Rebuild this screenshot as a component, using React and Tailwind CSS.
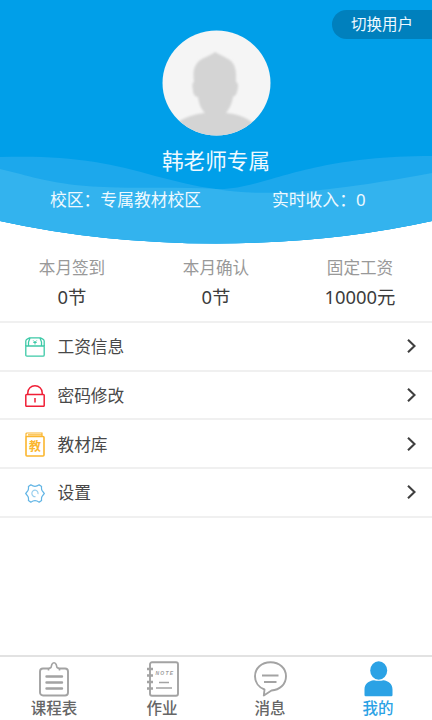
import React from 'react';

function HeaderWaves() {
  return (
    <svg className="absolute inset-0 h-[245px] w-full" viewBox="0 0 432 245" aria-hidden="true">
      <path fill="#009fe9" d="M0 0H432V221Q330 243.500 216 243.500Q102 243.500 0 221Z" />
      <path fill="#1ca8ec" d="M0 157C35 156 65 157 95 162C135 168 175 184 216 189C262 191 300 156 432 156V221Q330 243.500 216 243.500Q102 243.500 0 221Z" />
      <path fill="#33b3ee" d="M0 169C22 174 42 181 75 185C120 190 170 186 216 189C265 197 325 193 432 173V221Q330 243.500 216 243.500Q102 243.500 0 221Z" />
    </svg>
  );
}

function Avatar() {
  return (
    <svg className="h-[106px] w-[109px]" viewBox="0 0 109 106" aria-hidden="true">
      <defs>
        <clipPath id="face">
          <ellipse cx="54.500" cy="53" rx="54" ry="52.500" />
        </clipPath>
        <filter id="soft"><feGaussianBlur stdDeviation="0.8" /></filter>
      </defs>
      <ellipse cx="54.500" cy="53" rx="54" ry="52.500" fill="#f5f5f5" />
      <g clipPath="url(#face)">
        <path filter="url(#soft)" fill="#d4d4d4" d="M53 22C56 24 64 27 69 31C75 37 74 45 74 52C77 53 76 58 75 62C74 66 72 66 71 67C70 74 67 79 64 83C76 84 84 87 94 95V110H12V95C20 88 32 84 43 83C39 79 37 74 36 67C33 67 31 64 31 60C30 56 30 53 32 52C31 43 31 37 37 31C42 27 50 25 53 22Z" />
      </g>
    </svg>
  );
}

function WalletIcon() {
  return (
    <svg className="h-[20px] w-[20px]" viewBox="0 0 20 20" fill="none" stroke="#3cc9a7" strokeWidth="1.3">
      <path d="M0.800 9H19.200V18Q19.200 19.200 18 19.200H2Q0.800 19.200 0.800 18Z" />
      <path d="M0.800 9V4Q0.800 2.500 2.500 1.800L4.500 0.800H15.500L17.500 1.800Q19.200 2.500 19.200 4V9M5 1L3.500 5V9M15 1L16.500 5V9" />
      <path d="M8.300 3.500L10 5.300L11.700 3.500M8.300 5.500H11.700M10 5V7.500" strokeWidth="1" />
    </svg>
  );
}

function LockIcon() {
  return (
    <svg className="h-[22px] w-[20px]" viewBox="0 0 20 22" fill="none" stroke="#f01f36" strokeWidth="1.5">
      <rect x="0.800" y="9.500" width="18.400" height="11.800" rx="0.800" />
      <path d="M2.800 9.500V7.800C2.800 3.500 6 0.800 10 0.800S17.200 3.500 17.200 7.800V9.500M10 13V17.500" />
    </svg>
  );
}

function BookIcon() {
  return (
    <span className="relative flex h-[25px] w-[20px] items-center justify-center">
      <svg className="absolute inset-0 h-full w-full" viewBox="0 0 20 25" fill="none" stroke="#fbb62e" strokeWidth="1.6">
        <rect x="1" y="4.500" width="18" height="19.500" rx="1" />
        <path d="M1 5V2Q1 1 2 1H17V4.500M3 2.800H17" strokeWidth="1.2" />
      </svg>
      <span className="relative top-[2px] text-[12px] leading-none font-bold text-[#fbb62e]">教</span>
    </span>
  );
}

function GearIcon() {
  return (
    <svg className="h-[19px] w-[20px]" viewBox="0 0 20 18" preserveAspectRatio="none" fill="none" stroke="#62b5e5" strokeWidth="1.2" strokeLinejoin="round">
      <path d="M5.800 0.800Q8 2.300 10 2.300Q12 2.300 14.200 0.800L16.600 2.300Q16.200 5 17.100 6.300L19.300 9L17.100 11.700Q16.200 13 16.600 15.700L14.200 17.200Q12 15.700 10 15.700Q8 15.700 5.800 17.200L3.400 15.700Q3.800 13 2.900 11.700L0.700 9L2.900 6.300Q3.800 5 3.400 2.300Z" />
      <path d="M10.500 12A3.100 3.100 0 1 1 13 9.500" opacity="0.65" />
    </svg>
  );
}

function Stat({ label, value }) {
  return (
    <div className="flex flex-1 flex-col items-center">
      <span className="text-[16.6px] leading-[24px] text-[#999999]">{label}</span>
      <span className="mt-[4px] text-[18.4px] leading-[25px] text-[#3c3c3c]">{value}</span>
    </div>
  );
}

function MenuRow({ icon, label }) {
  return (
    <div className="flex h-[48.7px] items-center border-b-2 border-[#f0f0f0] pr-[16.5px] pl-[25px]">
      <span className="flex w-[20px] justify-center pt-[2px]">{icon}</span>
      <span className="ml-[12.5px] flex-1 pt-[2px] text-[16.7px] leading-[24px] text-[#484848]">{label}</span>
      <svg className="h-[14px] w-[9px]" viewBox="0 0 9 14" fill="none" stroke="#3f3f3f" strokeWidth="2.1">
        <path d="M1 0.800L7.500 7L1 13.200" />
      </svg>
    </div>
  );
}

function Tab({ icon, label, active }) {
  return (
    <div className={active ? 'flex flex-1 flex-col items-center text-[#2ba2e5]' : 'flex flex-1 flex-col items-center text-[#666666]'}>
      <span className="flex h-[36px] items-start">{icon}</span>
      <span className="text-[15.5px] leading-[22px] font-medium">{label}</span>
    </div>
  );
}

const scheduleIcon = (
  <svg className="h-[36px] w-[30px]" viewBox="0 0 30 36" fill="none" stroke="#a3a3a3" strokeWidth="1.9">
    <rect x="1" y="7.500" width="28" height="27" rx="3" />
    <path d="M9.500 9.500V8L12 6.500L12.800 3.500Q15 0 17.200 3.500L18 6.500L20.500 8V9.500" fill="white" strokeWidth="1.6" />
    <path d="M7.500 15.500H23M7.500 21.500H23M7.500 27.500H23" strokeWidth="2.400" strokeLinecap="round" />
  </svg>
);

const noteIcon = (
  <svg className="h-[36px] w-[33px]" viewBox="0 0 33 36" fill="none" stroke="#a3a3a3" strokeWidth="1.9">
    <rect x="4" y="1.300" width="28" height="33.400" rx="2" />
    <path d="M1 8H7M1 14.500H7M1 21H7M1 27.500H7" strokeWidth="2.600" />
    <path d="M13 21.500H23M10 27H26" strokeWidth="1.300" />
    <text x="9.500" y="14" fontSize="5" letterSpacing="1.2" fontWeight="bold" fontStyle="italic" fontFamily="Liberation Sans, sans-serif" fill="#9c9c9c" stroke="none">NOTE</text>
  </svg>
);

const chatIcon = (
  <svg className="h-[36px] w-[33px]" viewBox="0 0 33 36" fill="none" stroke="#a3a3a3" strokeWidth="1.9" strokeLinejoin="round">
    <path d="M16.500 1.200C25.500 1.200 32 7.200 32 15.200C32 23.500 25.500 29 17.500 29.500L9.800 34.500L10.500 28.500C5 26.500 1 21.500 1 15.200C1 7.200 7.500 1.200 16.500 1.200Z" />
    <path d="M8 14.500H24.500M10 21H22.500" strokeWidth="2.200" />
  </svg>
);

const personIcon = (
  <svg className="h-[36px] w-[29px]" viewBox="0 0 29 36" fill="#2ba2e5">
    <ellipse cx="14.700" cy="9.500" rx="8.500" ry="9.200" />
    <path d="M0.500 34V28.500C0.500 23 4.500 20 10 19.300C12.500 20 17 20 19.300 19.300C24.500 20 28.500 23 28.500 28.500V34Q28.500 35.200 27.300 35.200H1.700Q0.500 35.200 0.500 34Z" />
  </svg>
);

export default function App() {
  return (
    <div className="flex h-[720px] w-[432px] flex-col overflow-hidden bg-white font-['Noto_Sans','Noto_Sans_CJK_SC',sans-serif]">
      <header className="relative h-[245px] shrink-0 text-[#eef9ff]">
        <HeaderWaves />
        <button className="absolute top-[10px] right-0 flex h-[29px] w-[100px] items-center rounded-l-full bg-[#0080bd] pl-[19px] text-[15.5px] leading-none">
          切换用户
        </button>
        <div className="relative flex flex-col items-center pt-[30px]">
          <Avatar />
          <h1 className="mt-[10px] text-[21.6px] leading-[30px]">韩老师专属</h1>
          <div className="mt-[11px] flex w-full text-[16.8px] leading-[25px]">
            <span className="w-[272px] pl-[50px]">校区：专属教材校区</span>
            <span>实时收入：0</span>
          </div>
        </div>
      </header>
      <section className="flex h-[78px] shrink-0 border-b-2 border-[#f0f0f0] pt-[11px]">
        <Stat label="本月签到" value="0节" />
        <Stat label="本月确认" value="0节" />
        <Stat label="固定工资" value="10000元" />
      </section>
      <main className="flex-1">
        <MenuRow icon={<WalletIcon />} label="工资信息" />
        <MenuRow icon={<LockIcon />} label="密码修改" />
        <MenuRow icon={<BookIcon />} label="教材库" />
        <MenuRow icon={<GearIcon />} label="设置" />
      </main>
      <nav className="flex h-[65px] shrink-0 border-t-2 border-[#e2e2e2] pt-[4px]">
        <Tab icon={scheduleIcon} label="课程表" />
        <Tab icon={noteIcon} label="作业" />
        <Tab icon={chatIcon} label="消息" />
        <Tab icon={personIcon} label="我的" active />
      </nav>
    </div>
  );
}
